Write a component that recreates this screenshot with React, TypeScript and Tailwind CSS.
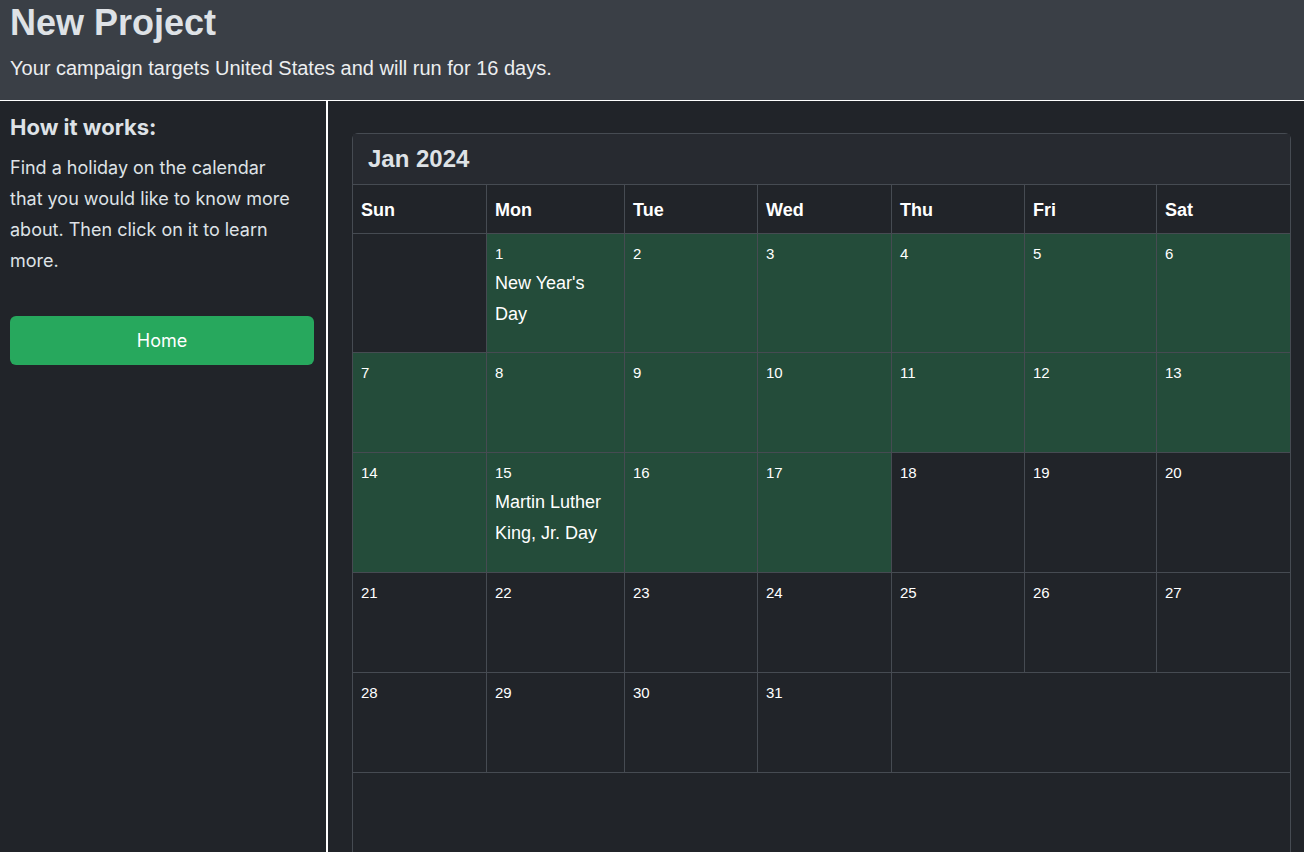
import React from "react";

type Cell = { day?: number; holiday?: string; active?: boolean };

const weekdays = ["Sun", "Mon", "Tue", "Wed", "Thu", "Fri", "Sat"];

// campaign runs Jan 1 - Jan 17
const isActive = (d: number) => d >= 1 && d <= 17;

const holidays: Record<number, string> = {
  1: "New Year's Day",
  15: "Martin Luther King, Jr. Day",
};

const buildWeeks = (): Cell[][] => {
  const weeks: Cell[][] = [];
  let week: Cell[] = [{}];
  for (let d = 1; d <= 31; d++) {
    week.push({ day: d, holiday: holidays[d], active: isActive(d) });
    if (week.length === 7) {
      weeks.push(week);
      week = [];
    }
  }
  if (week.length) weeks.push(week);
  return weeks;
};

const rowHeights = ["h-[119px]", "h-[100px]", "h-[120px]", "h-[100px]", "h-[100px]"];

const DayCell = ({ cell, first }: { cell: Cell; first: boolean }) => (
  <div
    className={`${first ? "" : "border-l"} border-[#464b52] px-2 pt-2 ${
      cell.active ? "bg-[#244c3a]" : "bg-[#212429]"
    }`}
  >
    {cell.day && (
      <div className="text-[15px] leading-6 text-white">{cell.day}</div>
    )}
    {cell.holiday && (
      <div className="mt-[2px] text-[18px] leading-[31px] text-white pr-1">{cell.holiday}</div>
    )}
  </div>
);

const Calendar = () => {
  const weeks = buildWeeks();
  return (
    <div className="rounded-t-md border border-[#464b52] pb-[120px]">
      <div className="h-[50px] bg-[#272a30] px-[15px] flex items-center text-[24px] font-bold text-[#dee2e6]">
        Jan 2024
      </div>
      <div className="border-t border-b border-[#464b52]">
        <div className="grid grid-cols-[133px_138px_133px_134px_133px_132px_134px] h-[48px]">
          {weekdays.map((w, i) => (
            <div
              key={w}
              className={`${i ? "border-l" : ""} border-[#464b52] px-2 pt-[3px] flex items-center text-[18px] font-bold text-white`}
            >
              {w}
            </div>
          ))}
        </div>
        {weeks.map((week, wi) => (
          <div
            key={wi}
            className={`grid grid-cols-[133px_138px_133px_134px_133px_132px_134px] border-t border-[#464b52] ${rowHeights[wi]}`}
          >
            {week.map((cell, ci) => (
              <DayCell key={ci} cell={cell} first={ci === 0} />
            ))}
            {week.length < 7 && (
              <div className="col-span-3 border-l border-[#464b52] bg-[#212429]" />
            )}
          </div>
        ))}
      </div>
    </div>
  );
};

const App = () => {
  return (
    <div className="min-h-screen bg-[#212429] font-['Liberation_Sans',Arial,sans-serif]">
      <div className="h-[101px] bg-[#3a3f46] border-b border-white px-[10px] pt-[3px]">
        <h1 className="text-[36px] leading-[40px] font-bold text-[#dee2e6]">New Project</h1>
        <p className="mt-[13px] text-[20px] leading-6 text-[#eceef0]">
          Your campaign targets United States and will run for 16 days.
        </p>
      </div>
      <div className="flex">
        <div className="w-[328px] shrink-0 border-r-2 border-white px-[10px] pt-[11px] font-['Inter',sans-serif] text-[#dee2e6]">
          <h2 className="text-[22px] leading-[30px] font-bold">How it works:</h2>
          <p className="mt-[10px] w-[288px] text-[18px] leading-[31px]">
            Find a holiday on the calendar that you would like to know more about. Then click on it to learn more.
          </p>
          <button className="mt-[40px] w-[304px] h-[49px] rounded-md bg-[#27a85d] text-white text-[18px]">
            Home
          </button>
        </div>
        <div className="flex-1 pl-[24px] pr-[13px] pt-[32px]">
          <Calendar />
        </div>
      </div>
    </div>
  );
};

export default App;
